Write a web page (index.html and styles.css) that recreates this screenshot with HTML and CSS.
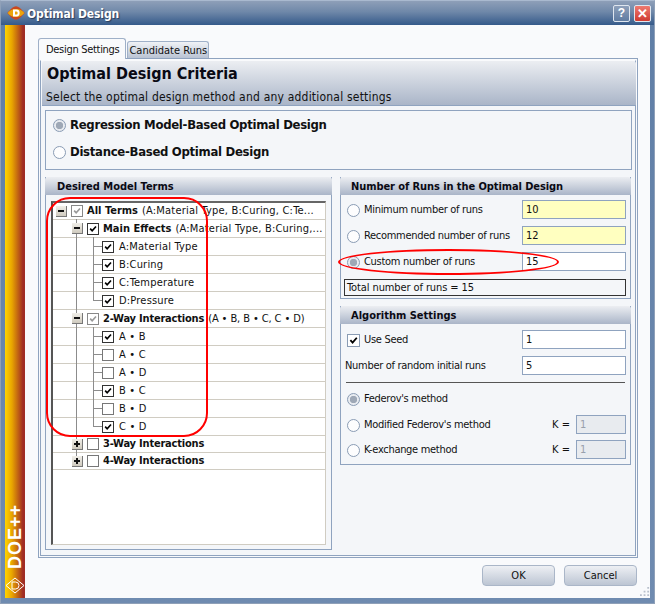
FILE: index.html
```html
<!DOCTYPE html>
<html lang="en">
<head>
<meta charset="utf-8">
<title>Optimal Design</title>
<link rel="stylesheet" href="styles.css">
</head>
<body>
<svg class="defs" width="0" height="0" aria-hidden="true">
  <symbol id="logo" viewBox="0 0 18 14">
    <path d="M9 .3 C12 .3 15 4 17.7 7 15 10 12 13.7 9 13.7 6 13.7 3 10 .3 7 3 4 6 .3 9 .3z" fill="#c9471e"/>
    <path d="M.6 7 C3 4.6 5 3 9 3 13 3 15 4.6 17.4 7 15 9.4 13 11 9 11 5 11 3 9.4 .6 7z" fill="#eba50c"/>
    <path d="M6 3.6h3.6a3 3.4 0 0 1 0 6.8H6z" fill="#fff"/>
    <path d="M8 5.4h1.5a1.2 1.6 0 0 1 0 3.2H8z" fill="#eba50c"/>
  </symbol>
  <symbol id="tick" viewBox="0 0 12 12">
    <path d="M2.6 5.6 5 8.2 9.6 3" fill="none" stroke="currentColor" stroke-width="2"/>
  </symbol>
</svg>
<div class="window">
  <header class="titlebar">
    <svg class="app-icon"><use href="#logo"/></svg>
    <span class="title">Optimal Design</span>
    <span class="cap cap-help">?</span>
    <span class="cap cap-close">✕</span>
  </header>
  <div class="body">
    <aside class="stripe">
      <span class="brand">DOE++</span>
      <svg class="brand-logo" viewBox="0 0 20 17"><path d="M10 1 19 8.500 10 16 1 8.500z" fill="none" stroke="#fff"/><path d="M7 5h3.500a3.500 3.500 0 0 1 0 7H7z" fill="none" stroke="#fff"/></svg>
    </aside>
    <main class="main">
      <nav class="tabs">
        <span class="tab active">Design Settings</span>
        <span class="tab">Candidate Runs</span>
      </nav>
      <section class="page">
        <div class="pane">
          <div class="banner">
            <h1>Optimal Design Criteria</h1>
            <p>Select the optimal design method and any additional settings</p>
          </div>
          <div class="method">
            <label class="big"><span class="radio on"></span>Regression Model-Based Optimal Design</label>
            <label class="big"><span class="radio"></span>Distance-Based Optimal Design</label>
          </div>
          <div class="columns">
            <section class="group terms">
              <h2>Desired Model Terms</h2>
              <div class="tree">
                <div class="row top"><span class="exp minus"></span><span class="cb mixed"><svg><use href="#tick"/></svg></span><b>All Terms</b><span class="note">(A:Material Type, B:Curing, C:Te...</span></div>
                <div class="row l1 trunk"><span class="exp minus"></span><span class="cb on"><svg><use href="#tick"/></svg></span><b>Main Effects</b><span class="note">(A:Material Type, B:Curing,...</span></div>
                <div class="row l2 trunk"><span class="cb on"><svg><use href="#tick"/></svg></span>A:Material Type</div>
                <div class="row l2 trunk"><span class="cb on"><svg><use href="#tick"/></svg></span>B:Curing</div>
                <div class="row l2 trunk"><span class="cb on"><svg><use href="#tick"/></svg></span>C:Temperature</div>
                <div class="row l2 trunk last"><span class="cb on"><svg><use href="#tick"/></svg></span>D:Pressure</div>
                <div class="row l1 trunk"><span class="exp minus"></span><span class="cb mixed"><svg><use href="#tick"/></svg></span><b class="way">2-Way Interactions</b><span class="note tight">(A • B, B • C, C • D)</span></div>
                <div class="row l2 trunk"><span class="cb on"><svg><use href="#tick"/></svg></span>A • B</div>
                <div class="row l2 trunk"><span class="cb"></span>A • C</div>
                <div class="row l2 trunk"><span class="cb"></span>A • D</div>
                <div class="row l2 trunk"><span class="cb on"><svg><use href="#tick"/></svg></span>B • C</div>
                <div class="row l2 trunk"><span class="cb"></span>B • D</div>
                <div class="row l2 trunk last"><span class="cb on"><svg><use href="#tick"/></svg></span>C • D</div>
                <div class="row l1 trunk short"><span class="exp plus"></span><span class="cb"></span><b class="way">3-Way Interactions</b></div>
                <div class="row l1 trunk short end"><span class="exp plus"></span><span class="cb"></span><b class="way">4-Way Interactions</b></div>
              </div>
            </section>
            <div class="side">
              <section class="group runs">
                <h2>Number of Runs in the Optimal Design</h2>
                <div class="fields">
                  <div class="field"><label><span class="radio"></span>Minimum number of runs</label><span class="input calc">10</span></div>
                  <div class="field"><label><span class="radio"></span>Recommended number of runs</label><span class="input calc">12</span></div>
                  <div class="field"><label><span class="radio on"></span>Custom number of runs</label><span class="input">15</span></div>
                  <div class="total">Total number of runs = 15</div>
                </div>
              </section>
              <section class="group algo">
                <h2>Algorithm Settings</h2>
                <div class="fields">
                  <div class="field"><label><span class="cb small on"><svg><use href="#tick"/></svg></span>Use Seed</label><span class="input">1</span></div>
                  <div class="field plain"><label>Number of random initial runs</label><span class="input">5</span></div>
                  <hr>
                  <div class="option first"><label><span class="radio on"></span>Federov's method</label></div>
                  <div class="option"><label><span class="radio"></span>Modified Federov's method</label><span class="k">K =</span><span class="input off">1</span></div>
                  <div class="option"><label><span class="radio"></span>K-exchange method</label><span class="k">K =</span><span class="input off">1</span></div>
                </div>
              </section>
            </div>
          </div>
        </div>
      </section>
      <footer class="actions">
        <button type="button">OK</button>
        <button type="button">Cancel</button>
      </footer>
    </main>
  </div>
</div>
<div class="mark mark-terms"></div>
<div class="mark mark-custom"></div>
<svg class="grip" viewBox="0 0 11 11"><path d="M8 0h2v2H8zM8 4h2v2H8zM8 8h2v2H8zM4 4h2v2H4zM4 8h2v2H4zM0 8h2v2H0z" fill="#b9c0cc"/></svg>
</body>
</html>
```
FILE: styles.css
```css
* { box-sizing: border-box; }
html, body { margin: 0; padding: 0; }
body {
  position: relative;
  width: 655px;
  height: 604px;
  overflow: hidden;
  font: 11px/14px "DejaVu Sans Condensed", "DejaVu Sans", sans-serif;
  color: #111;
}
.defs { position: absolute; }

.window {
  display: flex;
  flex-direction: column;
  width: 655px;
  height: 604px;
  padding: 0 4px 5px;
  background: linear-gradient(#5f7ea6, #6f8bb0);
  border: 1px solid #8fa0b8;
  border-top-color: #a9b9cf;
}
.titlebar {
  display: flex;
  align-items: center;
  flex: none;
  height: 24px;
  margin: 0 -4px;
  padding: 0 3px 0 6px;
  background: linear-gradient(#8e9fb8, #6f88a9 45%, #355a8a);
}
.app-icon { width: 18px; height: 14px; margin-right: 2px; }
.title {
  flex: 1;
  padding-top: 1px;
  color: #fff;
  font: bold 12px "DejaVu Sans Condensed", "DejaVu Sans", sans-serif;
  letter-spacing: -.1px;
  text-shadow: 1px 1px 1px #2a3c5a;
}
.cap {
  display: flex;
  align-items: center;
  justify-content: center;
  width: 17px;
  height: 17px;
  margin-left: 4px;
  border: 1px solid #dfe6ef;
  border-radius: 2px;
  color: #fff;
  font: bold 12px "Liberation Sans", sans-serif;
}
.cap-help { background: linear-gradient(#8ea0ba, #5f7ca2); }
.cap-close { background: linear-gradient(#ee7a70, #cf3a30); font-size: 13px; }

.body { display: flex; flex: 1; min-height: 0; }
.stripe {
  display: flex;
  flex-direction: column;
  align-items: center;
  justify-content: flex-end;
  flex: none;
  width: 20px;
  padding-bottom: 4px;
  background: linear-gradient(90deg, #ffd400, #e8a400 35%, #a02c24 90%);
}
.brand {
  writing-mode: vertical-rl;
  transform: rotate(180deg);
  color: #fff;
  font: bold 18px/20px "Liberation Sans", sans-serif;
  letter-spacing: 1px;
}
.brand-logo { flex: none; width: 20px; height: 17px; margin-top: 8px; }

.main {
  display: flex;
  flex-direction: column;
  flex: 1;
  padding: 13px 12px 0 13px;
  background: #f9fafc;
}
.tabs { display: flex; align-items: flex-end; height: 20px; gap: 1px; }
.tab {
  height: 17px;
  padding: 1px 1px 0;
  border: 1px solid #9fb0c8;
  border-bottom: 0;
  border-radius: 3px 3px 0 0;
  background: linear-gradient(#f0f2f6, #b9c3d3);
  line-height: 15px;
}
.tab.active {
  position: relative;
  z-index: 1;
  height: 21px;
  margin-bottom: -1px;
  padding: 3px 6px 0 7px;
  background: #f9fafc;
  letter-spacing: -.3px;
}
.page {
  height: 500px;
  padding: 1px;
  border: 1px solid #8fa3bf;
  background: #f9fafc;
}
.pane {
  height: 100%;
  padding-left: 1px;
  border: 1px solid #8fa3bf;
  border-top-color: #f9fafc;
  background: #f4f6f9;
}
.banner {
  height: 45px;
  margin-right: -1px;
  padding: 3px 4px 0;
  border-bottom: 1px solid #8fa3bf;
  border-radius: 3px 3px 0 0;
  background: linear-gradient(#eceef2, #aab5c8);
}
h1 { margin: 0; padding-left: 1px; font: bold 16px/20px "DejaVu Sans Condensed", "DejaVu Sans", sans-serif; color: #0a0a14; }
p { margin: 6px 0 0; font-size: 12px; line-height: 15px; letter-spacing: .2px; }
.method {
  display: flex;
  flex-direction: column;
  justify-content: center;
  gap: 9px;
  height: 60px;
  margin: 4px 3px 0;
  padding: 0 7px 3px;
  border: 1px solid #8fa3bf;
}
label { display: flex; align-items: center; }
.big { font: bold 13px/18px "DejaVu Sans Condensed", "DejaVu Sans", sans-serif; letter-spacing: -.3px; }
.big .radio { margin-right: 4px; }
.radio {
  display: inline-block;
  flex: none;
  width: 13px;
  height: 13px;
  margin-right: 4px;
  border: 1px solid #8a9cb4;
  border-radius: 50%;
  background: #fdfdfe;
}
.radio.on { background: radial-gradient(circle, #9ea8b6 0 3.400px, #e8ebf0 4px); }

.columns { display: flex; gap: 8px; margin: 7px 0 0 3px; }
.group { background: #f4f6f9; }
.group h2 {
  height: 18px;
  margin: 0 -1px;
  padding: 1px 11px 0;
  border-radius: 3px 3px 0 0;
  background: linear-gradient(#eceef2, #aab5c8);
  font: bold 11px/17px "DejaVu Sans Condensed", "DejaVu Sans", sans-serif;
  color: #0a0a14;
}
.terms h2 { padding-left: 12px; }
.runs h2 { letter-spacing: -.08px; }
.terms {
  flex: none;
  width: 287px;
  height: 373px;
  border: 1px solid #8fa3bf;
  border-top: 0;
}
.tree {
  height: 344px;
  margin: 6px 5px 0;
  border: 1px solid #d0ccc2;
  border-top: 2px solid #666;
  border-left: 2px solid #555;
  background: #fff;
}
.row {
  position: relative;
  display: flex;
  align-items: center;
  height: 18px;
  padding-left: 3px;
  border-bottom: 1px solid #d0ccc2;
  white-space: nowrap;
}
.row.top { height: 17px; }
.row b { font-weight: 700; }
.row b.way { letter-spacing: -.2px; }
.note { margin-left: 4px; letter-spacing: .2px; }
.note.tight { letter-spacing: -.1px; }
.row.short { height: 17px; }
.l1 { padding-left: 19px; }
.l2 { padding-left: 49px; letter-spacing: .2px; }
.l2 .cb { margin-right: 5px; }

.trunk::before {
  content: "";
  position: absolute;
  left: 23px;
  top: -1px;
  bottom: -1px;
  border-left: 1px solid #8c8c8c;
}
.end::before { bottom: 50%; }
.l2::after {
  content: "";
  position: absolute;
  left: 40px;
  top: -1px;
  bottom: -1px;
  width: 9px;
  background:
    linear-gradient(#8c8c8c, #8c8c8c) 0 0 / 1px 100% no-repeat,
    linear-gradient(#8c8c8c, #8c8c8c) 0 50% / 9px 1px no-repeat;
}
.l2.last::after {
  bottom: 50%;
  background:
    linear-gradient(#8c8c8c, #8c8c8c) 0 0 / 1px 100% no-repeat,
    linear-gradient(#8c8c8c, #8c8c8c) 0 100% / 9px 1px no-repeat;
}
.exp {
  position: relative;
  z-index: 1;
  flex: none;
  width: 11px;
  height: 11px;
  margin-right: 4px;
  border-right: 1px solid #777;
  border-bottom: 1px solid #777;
  background: linear-gradient(#f1efe9, #cfcabe);
}
.exp::before {
  content: "";
  position: absolute;
  left: 2px;
  top: 4px;
  width: 6px;
  height: 2px;
  background: #111;
}
.plus::after {
  content: "";
  position: absolute;
  left: 4px;
  top: 2px;
  width: 2px;
  height: 6px;
  background: #111;
}
.cb {
  position: relative;
  z-index: 1;
  display: inline-block;
  flex: none;
  width: 12px;
  height: 12px;
  margin-right: 4px;
  border: 1px solid #777;
  background: #fff;
}
.cb svg { display: block; width: 10px; height: 10px; color: #000; }
.cb.on { border-color: #333; }
.cb.mixed { border-color: #888; }
.cb.mixed svg { color: #999; }
.cb.small { width: 13px; height: 13px; border-color: #8a9cb4; }
.cb.small svg { width: 11px; height: 11px; }

.side { display: flex; flex-direction: column; flex: none; width: 291px; gap: 7px; }
.runs, .algo { border: 1px solid #8fa3bf; border-top: 0; }
.runs { height: 122px; }
.algo { height: 159px; }
.fields { display: flex; flex-direction: column; padding: 5px 4px 0 6px; }
.algo .fields { padding-top: 6px; }
.field, .option { display: flex; align-items: center; height: 19px; margin-bottom: 7px; }
.field label, .option label { flex: 1; padding-top: 1px; letter-spacing: -.3px; }
.input {
  flex: none;
  width: 104px;
  height: 19px;
  padding: 1px 3px 0;
  border: 1px solid #8fa3bf;
  background: #fff;
  line-height: 16px;
}
.calc { background: #ffffc0; }
.off { width: 50px; background: #e8ebef; color: #98a0ac; }
.k { margin-right: 6px; padding-top: 1px; }
.plain { margin-left: -2px; }
.total {
  height: 17px;
  margin: 1px 0 0 -3px;
  padding-left: 2px;
  border: 1px solid #333;
  line-height: 15px;
  letter-spacing: -.1px;
}
hr { width: 100%; height: 1px; margin: 0 0 6px -1px; border: 0; background: #555; }
.option { margin-bottom: 6px; }
.first { margin-bottom: 7px; }

.actions { display: flex; justify-content: flex-end; gap: 9px; padding: 7px 1px 0 0; }
button {
  width: 73px;
  height: 21px;
  padding: 0;
  border: 1px solid #aab6c8;
  border-radius: 4px;
  background: linear-gradient(#eef0f4, #bcc5d3);
  font: 11px "DejaVu Sans Condensed", "DejaVu Sans", sans-serif;
  color: #111;
}

.mark { position: absolute; border: 2px solid #f00; }
.mark-terms { left: 46px; top: 197px; width: 162px; height: 240px; border-radius: 24px; }
.mark-custom { left: 338px; top: 249px; width: 221px; height: 26px; border-radius: 50%; }
.grip { position: absolute; left: 640px; top: 587px; width: 10px; height: 10px; }
```
